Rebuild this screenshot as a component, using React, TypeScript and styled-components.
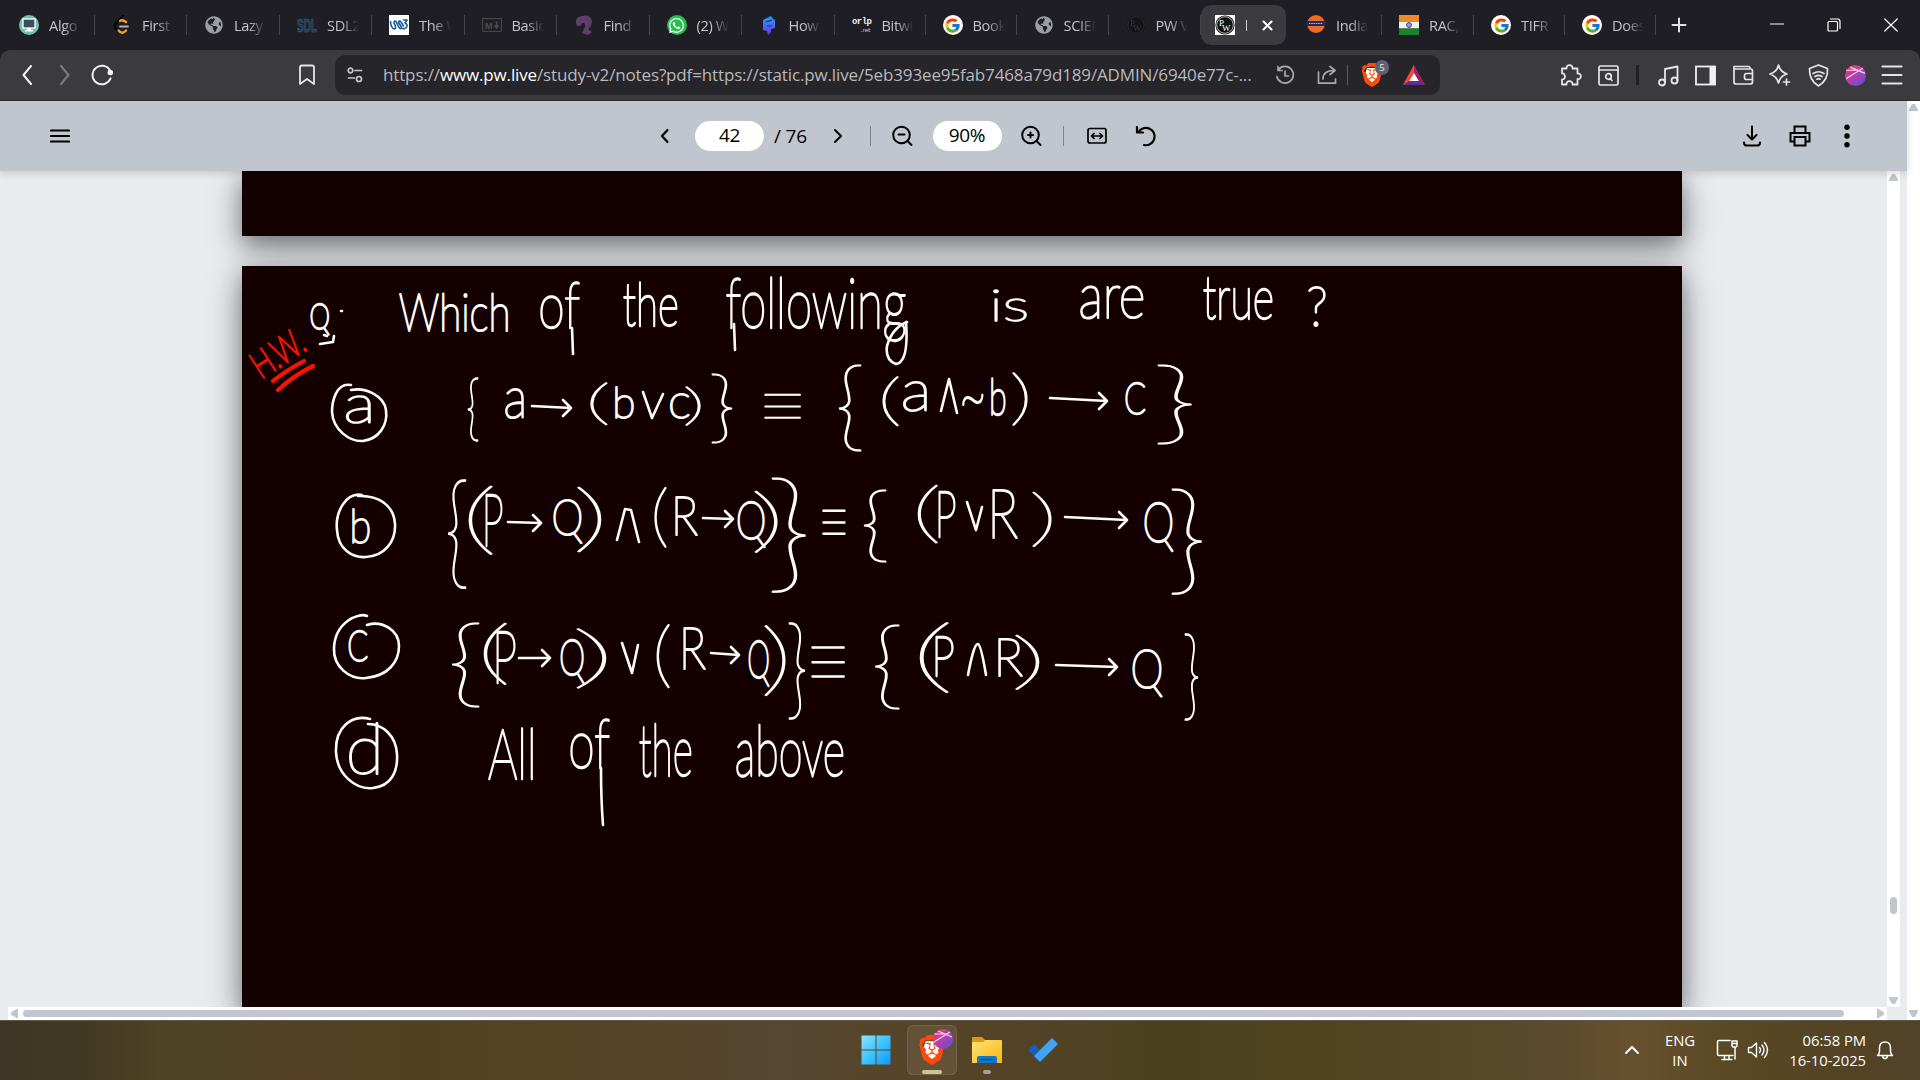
import React, { useMemo } from "react";
import styled, { createGlobalStyle } from "styled-components";
import { SiBrave } from "react-icons/si";
import { FcGoogle } from "react-icons/fc";
import { FaGlobeAmericas, FaWhatsapp } from "react-icons/fa";

const Global = createGlobalStyle`
  * { box-sizing: border-box; }
  body { margin: 0; overflow: hidden; background: #1f1e25; font-family: "Open Sans", "Noto Sans", sans-serif; }
  svg { display: block; }
`;

const Screen = styled.div`
  width: 1920px;
  height: 1080px;
  display: flex;
  flex-direction: column;
  overflow: hidden;
`;

/* ---------- tab strip ---------- */
const TabStrip = styled.div`
  height: 50px;
  background: #1f1e24;
  display: flex;
  align-items: center;
  padding-left: 2px;
`;
const Tab = styled.div<{ $w: number }>`
  width: ${(p) => p.$w}px;
  height: 40px;
  display: flex;
  align-items: center;
  gap: 10px;
  padding-left: 17px;
  position: relative;
  &::after {
    content: "";
    position: absolute;
    right: 0;
    top: 10px;
    width: 1px;
    height: 20px;
    background: #44434a;
  }
`;
const ActiveTab = styled.div`
  width: 85px;
  height: 40px;
  margin-right: 3px;
  border-radius: 10px;
  background: #3b3a3f;
  display: flex;
  align-items: center;
  padding-left: 14px;
`;
const ActiveMark = styled.div`
  width: 1px;
  height: 11px;
  margin: 0 15px 0 11px;
  background: #cfcfd2;
`;
const TabLabel = styled.div`
  width: 32px;
  overflow: hidden;
  white-space: nowrap;
  font-size: 14.6px;
  letter-spacing: -0.35px;
  color: #c3c3c8;
  line-height: 24px;
  padding-bottom: 1px;
  mask-image: linear-gradient(90deg, #000 45%, transparent 100%);
`;
const Fav = styled.div<{ $bg?: string; $round?: boolean; $dim?: number }>`
  width: 20px;
  height: 20px;
  flex: none;
  display: flex;
  align-items: center;
  justify-content: center;
  background: ${(p) => p.$bg || "transparent"};
  border-radius: ${(p) => (p.$round ? "50%" : "0")};
  opacity: ${(p) => p.$dim || 1};
`;
const PlusWrap = styled.div`
  margin-left: 15px;
`;
const WindowButtons = styled.div`
  margin-left: auto;
  padding-right: 22px;
  display: flex;
  align-items: center;
  gap: 43px;
`;

/* ---------- browser toolbar ---------- */
const ToolbarBack = styled.div`
  background: #1f1e24;
`;
const Toolbar = styled.div`
  height: 51px;
  background: #3b3a3f;
  border-radius: 10px 10px 0 0;
  border-bottom: 1px solid #2e2d33;
  display: flex;
  align-items: center;
`;
const Slot = styled.div<{ $gap?: number }>`
  width: 30px;
  height: 30px;
  flex: none;
  margin-left: ${(p) => p.$gap || 0}px;
  display: flex;
  align-items: center;
  justify-content: center;
  position: relative;
`;
const UrlBar = styled.div`
  width: 1105px;
  height: 40px;
  margin-left: 13px;
  border-radius: 10px;
  background: #26252a;
  display: flex;
  align-items: center;
  padding-left: 5px;
`;
const Url = styled.div`
  width: 880px;
  margin-left: 13px;
  font-size: 17px;
  letter-spacing: -0.14px;
  line-height: 26px;
  white-space: nowrap;
  color: #b9b9be;
  b { font-weight: 400; color: #fff; }
`;
const VLine = styled.div<{ $c: string; $h: number; $gap: number; $w?: number }>`
  width: ${(p) => p.$w || 1}px;
  height: ${(p) => p.$h}px;
  flex: none;
  margin-left: ${(p) => p.$gap}px;
  background: ${(p) => p.$c};
`;
const Badge = styled.div`
  position: absolute;
  left: 18px;
  top: 0;
  width: 14px;
  height: 15px;
  border-radius: 7px;
  background: #5f6270;
  color: #e8e8ea;
  font-size: 9.5px;
  line-height: 15px;
  text-align: center;
`;

/* ---------- pdf viewer ---------- */
const Viewer = styled.div`
  flex: 1;
  min-height: 0;
  display: flex;
`;
const ViewerMain = styled.div`
  width: 1907px;
  display: flex;
  flex-direction: column;
`;
const PdfBar = styled.div`
  height: 70px;
  flex: none;
  background: #c1c5ce;
  display: flex;
  align-items: center;
  color: #000;
  font-size: 19px;
  position: relative;
  z-index: 1;
  box-shadow: 0 2px 8px rgba(0, 0, 0, 0.16);
`;
const Pill = styled.div<{ $gap: number }>`
  width: 69px;
  height: 30px;
  margin-left: ${(p) => p.$gap}px;
  border-radius: 15px;
  background: #fff;
  line-height: 29px;
  text-align: center;
  letter-spacing: -0.3px;
`;
const PageCount = styled.div`
  width: 49px;
  padding-left: 10px;
  letter-spacing: -0.2px;
  white-space: nowrap;
`;
const Body = styled.div`
  flex: 1;
  min-height: 0;
  display: flex;
  background: #e9ebef;
`;
const Canvas = styled.div`
  width: 1887px;
  display: flex;
  flex-direction: column;
`;
const Pages = styled.div`
  height: 836px;
  overflow: hidden;
  display: flex;
  flex-direction: column;
  gap: 30px;
  padding-left: 242px;
`;
const Page = styled.div<{ $h: number }>`
  width: 1440px;
  height: ${(p) => p.$h}px;
  flex: none;
  background: #140000;
  box-shadow: 0 13px 38px rgba(0, 0, 0, 0.28), 0 8px 22px rgba(0, 0, 0, 0.34);
`;
const HScroll = styled.div`
  height: 13px;
  margin-left: 8px;
  background: #fff;
  display: flex;
  align-items: center;
  padding: 0 3px;
`;
const HThumb = styled.div`
  width: 1821px;
  height: 7px;
  margin: 0 auto 0 5px;
  border-radius: 4px;
  background: #c1c5ce;
`;
const VScroll = styled.div<{ $h?: number }>`
  width: 13px;
  height: ${(p) => (p.$h ? p.$h + "px" : "100%")};
  flex: none;
  background: #fff;
  display: flex;
  flex-direction: column;
  align-items: center;
  padding: 3px 0;
`;
const VThumb = styled.div`
  width: 7px;
  height: 17px;
  margin-top: 716px;
  border-radius: 4px;
  background: #c1c5ce;
`;
const Tri = styled.div<{ $d: "u" | "d" | "l" | "r" }>`
  width: ${(p) => ("ud".includes(p.$d) ? 9 : 7)}px;
  height: ${(p) => ("ud".includes(p.$d) ? 7 : 9)}px;
  flex: none;
  margin-top: ${(p) => (p.$d === "d" ? "auto" : "0")};
  background: #c1c5ce;
  clip-path: ${(p) =>
    ({
      u: "polygon(35% 0,65% 0,100% 80%,100% 100%,0 100%,0 80%)",
      d: "polygon(0 0,100% 0,100% 20%,65% 100%,35% 100%,0 20%)",
      l: "polygon(0 35%,80% 0,100% 0,100% 100%,80% 100%,0 65%)",
      r: "polygon(0 0,20% 0,100% 35%,100% 65%,20% 100%,0 100%)",
    })[p.$d]};
`;

/* ---------- taskbar ---------- */
const Taskbar = styled.div`
  height: 60px;
  flex: none;
  border-top: 1px solid #625746;
  background: linear-gradient(90deg, #3e3624 0, #423923 80px, #4e4425 170px, #4f4325 215px, #543f26 300px, #51401f 420px, #554326 560px, #574630 780px, #564428 930px, #524225 1060px, #4a4120 1160px, #50431f 1320px, #5b4a2e 1560px, #68502f 1630px, #584824 1740px, #534224 1860px, #52422a 1920px);
  display: flex;
  align-items: center;
  padding: 0 0 1px 851px;
  color: #fff;
`;
const Task = styled.div<{ $on?: boolean }>`
  width: 50px;
  height: 50px;
  margin-right: 5.5px;
  border-radius: 6px;
  border: 1px solid ${(p) => (p.$on ? "rgba(255,255,255,.1)" : "transparent")};
  background: ${(p) => (p.$on ? "rgba(255,255,255,.08)" : "transparent")};
  display: flex;
  align-items: center;
  justify-content: center;
  position: relative;
`;
const ProfileBadge = styled.div`
  position: absolute;
  left: 25px;
  top: 3px;
`;
const Running = styled.div<{ $w: number; $c: string }>`
  position: absolute;
  bottom: 0;
  left: calc(50% - ${(p) => p.$w / 2}px);
  width: ${(p) => p.$w}px;
  height: 4px;
  border-radius: 2px;
  background: ${(p) => p.$c};
`;
const Tray = styled.div`
  margin-left: auto;
  padding: 0 20px 1px 0;
  display: flex;
  align-items: center;
  font-size: 14.8px;
  line-height: 20px;
`;
const TrayText = styled.div<{ $w: number; $align: string; $gap: number; $ls?: number }>`
  width: ${(p) => p.$w}px;
  margin-left: ${(p) => p.$gap}px;
  text-align: ${(p) => p.$align};
  letter-spacing: ${(p) => p.$ls || 0}px;
  white-space: nowrap;
  display: flex;
  flex-direction: column;
`;

/* ---------- notes on the page ---------- */
const INK = "#fffdfa";
const FONT = '"Lato", "Open Sans", sans-serif';

type Box = [string, number, number, number, number];

/* Text whose visible bounds are stretched to the box x0,y0 - x1,y1. */
const Fit = ({ box, color = INK, w = 2 }: { box: Box; color?: string; w?: number }) => {
  const [text, x0, y0, x1, y1] = box;
  const m = useMemo(() => {
    const c = document.createElement("canvas").getContext("2d")!;
    c.font = `100 100px ${FONT}`;
    const t = c.measureText(text);
    const gw = t.actualBoundingBoxLeft + t.actualBoundingBoxRight;
    const gh = t.actualBoundingBoxAscent + t.actualBoundingBoxDescent;
    const sx = (x1 - x0 - 2) / gw;
    const sy = (y1 - y0 - 2) / gh;
    return `translate(${x0 + 1 + t.actualBoundingBoxLeft * sx} ${y0 + 1 + t.actualBoundingBoxAscent * sy}) scale(${sx} ${sy})`;
  }, [text, x0, y0, x1, y1]);
  return (
    <text
      transform={m}
      fontFamily={FONT}
      fontSize="100"
      fontWeight="100"
      fill={color}
      stroke={color}
      strokeWidth={w}
      strokeLinejoin="round"
      vectorEffect="non-scaling-stroke"
    >
      {text}
    </text>
  );
};

const words: Box[] = [
  ["Q", 310, 303, 330, 336], ["Which", 399, 292, 508, 333], ["of", 540, 282, 580, 330], ["the", 623, 281, 678, 328],
  ["following", 726, 275, 906, 342], ["is", 993, 288, 1027, 322], ["are", 1080, 286, 1144, 320], ["true", 1203, 278, 1273, 321], ["?", 1308, 285, 1326, 328],
  ["a", 346, 396, 371, 425], ["{", 467, 376, 479, 442], ["a", 505, 388, 524, 420], ["(", 590, 381, 608, 426], ["b", 615, 385, 634, 419],
  ["c", 670, 393, 690, 419], [")", 685, 385, 701, 427], ["}", 711, 373, 733, 443], ["≡", 764, 393, 801, 420],
  ["{", 838, 363, 862, 452], ["(", 882, 375, 899, 427], ["a", 903, 381, 927, 413], ["~", 962, 394, 984, 406],
  ["b", 991, 377, 1006, 416], [")", 1012, 372, 1028, 427], ["C", 1125, 381, 1146, 415], ["}", 1157, 363, 1193, 445],
  ["b", 352, 507, 370, 544], ["{", 447, 477, 467, 589], ["(", 468, 485, 493, 556], ["P", 485, 495, 503, 547], ["Q", 553, 498, 583, 544],
  [")", 577, 486, 602, 553], ["(", 654, 487, 667, 549], ["R", 675, 496, 698, 536], ["Q", 737, 500, 766, 548],
  [")", 754, 489, 778, 554], ["}", 771, 477, 807, 593], ["≡", 822, 509, 846, 536], ["{", 863, 488, 887, 563], ["(", 917, 484, 938, 545],
  ["P", 938, 491, 956, 538], ["R", 992, 490, 1018, 539], [")", 1032, 490, 1052, 548], ["Q", 1144, 502, 1174, 552],
  ["}", 1171, 488, 1203, 595],
  ["C", 348, 630, 368, 662], ["{", 451, 621, 480, 708], ["(", 483, 622, 507, 686], ["P", 496, 632, 516, 684], ["Q", 560, 638, 585, 684],
  [")", 576, 628, 607, 690], ["(", 656, 623, 670, 689], ["R", 683, 628, 706, 670], ["Q", 748, 640, 770, 687],
  [")", 764, 624, 786, 697], ["}", 788, 621, 806, 720], ["≡", 811, 646, 845, 679], ["{", 874, 623, 900, 710], ["(", 919, 621, 949, 695],
  ["P", 935, 636, 954, 677], ["R", 998, 638, 1023, 677], [")", 1015, 634, 1040, 691], ["Q", 1132, 649, 1163, 698],
  ["}", 1184, 632, 1199, 721],
  ["d", 349, 722, 379, 776], ["All", 488, 727, 533, 780], ["of", 570, 719, 610, 770], ["the", 639, 723, 692, 778], ["above", 736, 724, 844, 778],
];

const arrows: [number, number, number, number][] = [
  [532, 406, 571, 408], [1050, 398, 1107, 401], [508, 522, 541, 523], [703, 518, 733, 519], [1065, 517, 1127, 520],
  [519, 658, 550, 658], [711, 653, 739, 655], [1056, 665, 1117, 667],
];

/* logical or / and marks */
const wedges = [
  "M643 392L652 418L663 394",
  "M941 411L949 379L957 413",
  "M617 540L625 509L631 510L639 542",
  "M967 502L976 530L982 507",
  "M622 643L632 673L638 645",
  "M968 675Q974 643 978 644Q981 645 986 675",
];

const circles = [
  "M351 385C336 382 332 402 332 412C333 430 350 442 363 441C379 439 388 425 386 410C384 396 366 387 351 390",
  "M362 495C346 492 335 512 337 530C338 549 352 558 366 557C384 556 396 542 395 524C394 505 378 495 358 496",
  "M367 616C359 612 335 622 334 648C333 667 350 680 366 678C388 676 399 662 399 646C399 630 382 620 367 625",
  "M370 719C352 714 335 727 336 752C337 775 356 790 373 788C391 786 398 772 397 754C396 736 383 724 368 724",
];

const Notes = () => (
  <svg width="1440" height="741" viewBox="242 266 1440 741">
    {words.map((b, i) => (
      <Fit key={i} box={b} w={"(){}≡".includes(b[0]) ? 1.4 : 2} />
    ))}
    <g fill="none" stroke={INK} strokeWidth="2.6" strokeLinecap="round" strokeLinejoin="round">
      {circles.map((d) => (
        <path key={d} d={d} />
      ))}
      {wedges.map((d) => (
        <path key={d} d={d} />
      ))}
      {arrows.map(([a, b, c, d]) => (
        <path key={a + "-" + b} d={`M${a} ${b}L${c} ${d}M${c - 8} ${d - 8}L${c} ${d}L${c - 8} ${d + 8}`} />
      ))}
      {/* long pen tails under the words */}
      <path d="M572 328L573 354M601 768Q601 800 603 825M734 324L735 350M906 322Q909 362 896 364Q885 360 887 346Q892 328 907 322" />
      <path d="M324 335L327 336M320 344L333 342L334 336M341 311L342 311" />
    </g>
    <g transform="translate(266 378) rotate(-33)">
      <Fit box={["H.W.", -3, -29, 50, 0]} color="#f51400" w={2} />
    </g>
    <path d="M273 381Q287 370 304 361M278 390Q293 376 313 366" fill="none" stroke="#f51400" strokeWidth="4.2" strokeLinecap="round" />
  </svg>
);

/* ---------- icons ---------- */
const Line = ({ s = 20, c = "#e6e6e8", w = 1.8, d, children }: any) => (
  <svg width={s} height={s} viewBox={`0 0 ${s} ${s}`} fill="none" stroke={c} strokeWidth={w} strokeLinecap="round" strokeLinejoin="round">
    {d && <path d={d} />}
    {children}
  </svg>
);
const BraveMark = ({ size }: { size: number }) => (
  <svg width={size} height={size} viewBox="0 0 24 24">
    <path d="M7 5h10l2 6-3 8-4 3-4-3-3-8z" fill="#fff" />
    <SiBrave size={24} color="#fb4a0a" />
  </svg>
);
const Orb = ({ s = 21 }: { s?: number }) => (
  <svg width={s} height={s} viewBox="0 0 20 20">
    <defs>
      <linearGradient id="orb" x1="0" y1="0" x2="1" y2="1">
        <stop offset="0" stopColor="#f0356a" />
        <stop offset=".5" stopColor="#b23fb0" />
        <stop offset="1" stopColor="#4a55d6" />
      </linearGradient>
    </defs>
    <circle cx="10" cy="10" r="10" fill="url(#orb)" />
    <path d="M1 13L17 3M5 2L19 8M1 5L14 5" stroke="#f6d6ee" strokeWidth="1.1" fill="none" />
  </svg>
);
const PwMark = ({ ring = "#111", ink = "#fff" }) => (
  <svg width="20" height="20" viewBox="0 0 20 20">
    <circle cx="10" cy="10" r="9.6" fill={ring} />
    <circle cx="10" cy="10" r="8.3" fill="none" stroke={ink} strokeWidth=".7" />
    <text x="4" y="10.5" fontFamily="Liberation Serif, serif" fontSize="9" fill={ink}>P</text>
    <text x="7" y="16" fontFamily="Liberation Serif, serif" fontSize="9" fill={ink}>W</text>
  </svg>
);
const Globe = () => (
  <Fav><FaGlobeAmericas size={18} color="#9a9da3" /></Fav>
);
const Google = () => (
  <Fav $bg="#fff" $round><FcGoogle size={17} /></Fav>
);

const leftTabs: [number, string, React.ReactNode][] = [
  [93, "Algo", <Fav $bg="#6fc3ae" $round><svg width="14" height="16" viewBox="0 0 14 16"><rect x="1" y="2" width="12" height="9" fill="#3f4c5c" stroke="#fff" strokeWidth="1.3" /><path d="M5 11h4v2h2v1.5H3V13h2z" fill="#fff" /></svg></Fav>],
  [92, "First", <Fav><Line s={20} c="#050505" w={2.4}><path d="M11 1L3.5 9Q2 11 3.5 13L6 16" /><path d="M6.5 15.5Q10 20 14 15.5M8 6Q10 4 14 7" stroke="#f7a01b" /><path d="M8 11.5H16" stroke="#b3b3b3" strokeWidth="1.800" /></Line></Fav>],
  [93, "Lazy", <Globe />],
  [92, "SDL2", <Fav><svg width="20" height="18"><text x="0" y="15.500" textLength="20" lengthAdjust="spacingAndGlyphs" fontFamily="Liberation Sans" fontWeight="700" fontSize="19" fill="#173654" stroke="#4a6684" strokeWidth=".7">SDL</text></svg></Fav>],
  [92.5, "The W", <Fav $bg="#fff"><Line s={20} c="#175b9c" w={1.600}><path d="M1.500 6.500Q2 13.500 5.500 14Q8 13 5 8Q5 5 7 6.500L10 12.500Q12 15 12.500 12L9.500 7.500Q10 5 12 7L14.500 11M14.500 5H18L16 8Q18.500 9 18 11.500Q16.500 14.500 13.500 13.500" /></Line></Fav>],
  [92, "Basic", <Fav><svg width="20" height="14"><rect x=".6" y=".6" width="18.800" height="12.800" fill="none" stroke="#4a4a4c" /><text x="3" y="10.500" fontFamily="Liberation Sans" fontWeight="700" fontSize="9" fill="#4e4e50">M</text><path d="M14.500 3.500v6M12.500 7.500l2 2.500 2-2.500" stroke="#4e4e50" fill="none" strokeWidth="1.500" /></svg></Fav>],
  [93, "Find t", <Fav><svg width="20" height="20"><path d="M2 8Q1 2 8 1Q16-1 18 6Q18 11 14 14L18 17L14 20L8 18L11 12Q12 7 8 8Q7 12 3 11z" fill="#5f3e69" /></svg></Fav>],
  [92, "(2) W", <Fav $bg="#25c04f" $round><FaWhatsapp size={17} color="#fff" /></Fav>],
  [93, "How t", <Fav><svg width="16" height="20"><defs><linearGradient id="hw" x1="0" y1="0" x2="0" y2="1"><stop offset="0" stopColor="#16a6ee" /><stop offset=".5" stopColor="#4a66f5" /><stop offset="1" stopColor="#7b34e8" /></linearGradient></defs><path d="M2 5L10 1L12 4L14 5V13L10 14V17L7 20L6 16L2 15z" fill="url(#hw)" /><path d="M5 7L11 5M6 11h5" stroke="#1f2a6a" strokeWidth="1.200" /></svg></Fav>],
  [91, "Bitwis", <Fav><svg width="20" height="18"><text x="0" y="8" textLength="20" fontFamily="Liberation Mono" fontWeight="700" fontSize="9" fill="#f0f0f0">orlp</text><text x="8" y="16" textLength="11" fontFamily="Liberation Mono" fontSize="6" fill="#c5c5c5">.net</text></svg></Fav>],
  [91, "Book", <Google />],
  [92, "SCIEN", <Globe />],
  [92.5, "PW V", <Fav $dim={0.6}><PwMark ring="#0d0d0f" ink="#4a4a4e" /></Fav>],
];
const rightTabs: [number, string, React.ReactNode][] = [
  [93, "India", <Fav><svg width="20" height="20"><circle cx="10" cy="9" r="9" fill="#ee6b23" /><rect x="0" y="6" width="20" height="5" rx="1" fill="#182a68" /><path d="M3 8.500h14" stroke="#b9c0d8" strokeWidth="1.200" strokeDasharray="1.500 .8" /><path d="M2 19.300h16" stroke="#15174a" strokeWidth="1.600" /></svg></Fav>],
  [92, "RAC,", <Fav><svg width="20" height="20"><rect width="20" height="7" fill="#ef8a27" /><rect y="7" width="20" height="6.500" fill="#f1f1f1" /><rect y="13.500" width="20" height="6.500" fill="#17832b" /><circle cx="10" cy="10" r="2.400" fill="#9a9fcb" stroke="#3a3d8e" /></svg></Fav>],
  [91, "TIFR", <Google />],
  [91, "Does", <Google />],
];

const TabItem = ({ t }: { t: [number, string, React.ReactNode] }) => (
  <Tab $w={t[0]}>
    {t[2]}
    <TabLabel>{t[1]}</TabLabel>
  </Tab>
);

export default function App() {
  return (
    <Screen>
      <Global />
      <TabStrip>
        {leftTabs.map((t, i) => <TabItem key={i} t={t} />)}
        <ActiveTab>
          <Fav $bg="#fff"><PwMark /></Fav>
          <ActiveMark />
          <Line s={11} c="#fff" w={2.1} d="M1.500 1.500l8 8M9.500 1.500l-8 8" />
        </ActiveTab>
        {rightTabs.map((t, i) => <TabItem key={i} t={t} />)}
        <PlusWrap><Line s={16} c="#e2e2e4" w={2} d="M8 1.500v13M1.500 8h13" /></PlusWrap>
        <WindowButtons>
          <Line s={14} c="#fff" w={1.200} d="M.5 6h13" />
          <Line s={14} c="#fff" w={1.200} d="M1 4.500q0-1 1-1h7.500q1 0 1 1v7.500q0 1-1 1h-7.500q-1 0-1-1zM3.500 1h7q2.500 0 2.500 2.500v7" />
          <Line s={14} c="#fff" w={1.200} d="M.8 1l12.400 12M13.200 1L.8 13" />
        </WindowButtons>
      </TabStrip>

      <ToolbarBack>
        <Toolbar>
          <Slot $gap={12}><Line c="#f2f2f3" w={2} d="M14 1L6.500 10l7.500 9" /></Slot>
          <Slot $gap={8}><Line c="#7c7b81" w={2} d="M6 1l7.500 9L6 19" /></Slot>
          <Slot $gap={7}><Line s={22} c="#f2f2f3" w={2}><path d="M19.500 14.500A9.300 9.300 0 1 1 19 6.500" /><circle cx="19.300" cy="8.500" r="1.800" fill="#f2f2f3" /></Line></Slot>
          <Slot $gap={175}><Line s={22} d="M4 3.500q0-2 2-2h10q2 0 2 2V20l-7-5-7 5z" /></Slot>
          <UrlBar>
            <Slot><Line s={18} c="#c9c9cc" w={1.700}><circle cx="4.500" cy="4.500" r="2.300" /><circle cx="13" cy="13" r="2.500" /><path d="M9 4.500h6.500M2.500 12h6" /></Line></Slot>
            <Url>https://<b>www.pw.live</b>/study-v2/notes?pdf=https://static.pw.live/5eb393ee95fab7468a79d189/ADMIN/6940e77c-...</Url>
            <Slot $gap={7}><Line c="#a9a9ae" w={1.700}><path d="M3.200 5A8.300 8.300 0 1 1 1.900 11.500M3 1.500V5.500H7M10 6v5h3.500" /></Line></Slot>
            <Slot $gap={12}><Line c="#a9a9ae" w={1.700} d="M1.500 7v11.200h17V14M6 14q0-8.500 11-8.500M13 1.500l5 4-5 4" /></Slot>
            <VLine $c="#5b5a60" $h={20} $gap={5} />
            <Slot $gap={9}><BraveMark size={24} /><Badge>5</Badge></Slot>
            <Slot $gap={12}>
              <svg width="24" height="22" viewBox="0 0 24 22"><path d="M12 1L1 21h22z" fill="#662d91" /><path d="M12 1L1 21l6-4 5-8z" fill="#ff4724" /><path d="M12 1l11 20-6-4-5-8z" fill="#9e1f63" /><path d="M12 9l4.800 8H7.200z" fill="#fff" /></svg>
            </Slot>
          </UrlBar>
          <Slot $gap={116}><Line s={24} w={1.800} d="M3 5.500h4.500C7 1 14 1 13.500 5.500H18.500V10.500C23 10 23 16.500 18.500 16V21.500H13.500C14 17 7 17 7.500 21.500H3V16.500C7 17 7 10 3 10.500z" /></Slot>
          <Slot $gap={7}><Line s={21} w={1.700}><rect x="1" y="1" width="19" height="19" rx="1.500" /><path d="M1 5h19M12 13.500l2 2" /><circle cx="10.500" cy="11.500" r="2.800" /></Line></Slot>
          <VLine $c="#222126" $h={20} $gap={13} $w={3} />
          <Slot $gap={14}><Line s={23} w={1.800}><circle cx="5" cy="18.500" r="3" /><circle cx="17.500" cy="16.500" r="3" /><path d="M8 18.500V5l12.500-2.500v14" /></Line></Slot>
          <Slot $gap={7}><svg width="21" height="21"><rect x="1" y="1.500" width="19" height="18" fill="none" stroke="#f0f0f2" strokeWidth="1.800" /><rect x="14.500" y="1" width="6" height="19" fill="#f0f0f2" /></svg></Slot>
          <Slot $gap={8}><Line s={22} w={1.700} d="M2 4.500V18q0 2 2 2h14q2.500 0 2.500-2V7q0-2-2-2H2V2.500h14.500q1.500 0 1.500 2M20.500 9.500h-6q-2 0-2 2v2q0 2 2 2h6" /></Slot>
          <Slot $gap={7}><Line s={24} w={1.700} d="M10.500 2q1.500 6.500 8.500 9q-7 2-8.500 9q-2-7-8.500-9q7-2 8.500-9zM18.500 16v6M15.500 19h6" /></Slot>
          <Slot $gap={8}><Line s={23} w={1.700} d="M11.500 1l9 3.500q.8 12-9 17.500Q2 16.500 2.500 4.500zM6 9.500q5.500-3.500 11 0M8 12.500q3.500-2.300 7 0M10 15.200q1.500-1 3 0" /></Slot>
          <Slot $gap={7}><Orb /></Slot>
          <Slot $gap={7}><Line s={22} w={2} d="M1.500 2.500h19M1.500 11h19M1.500 19.500h19" /></Slot>
        </Toolbar>
      </ToolbarBack>

      <Viewer>
        <ViewerMain>
          <PdfBar>
            <Slot $gap={45}><Line s={20} c="#000" w={2.200} d="M1 4.500h18M1 10h18M1 15.500h18" /></Slot>
            <Slot $gap={575}><Line s={16} c="#000" w={2.200} d="M10.500 2L5 8l5.500 6" /></Slot>
            <Pill $gap={15}>42</Pill>
            <PageCount>/ 76</PageCount>
            <Slot $gap={10}><Line s={16} c="#000" w={2} d="M5 2l6 6-6 6" /></Slot>
            <VLine $c="#7f838b" $h={20} $gap={16.5} />
            <Slot $gap={16.5}><Line s={22} c="#000" w={2}><circle cx="10.500" cy="10" r="8.300" /><path d="M16.500 16l4 4M7.500 9.500h6" /></Line></Slot>
            <Pill $gap={15.5}>90%</Pill>
            <Slot $gap={14.5}><Line s={22} c="#000" w={2}><circle cx="10.500" cy="10" r="8.300" /><path d="M16.500 16l4 4M8 10h5M10.500 7.500v5" /></Line></Slot>
            <VLine $c="#7f838b" $h={20} $gap={17} />
            <Slot $gap={18}><Line s={20} c="#000" w={1.700}><rect x="1" y="2.500" width="18" height="14.500" rx="2" /><path d="M4.500 10h11M7 7.500L4.500 10L7 12.500M13 7.500l2.500 2.500L13 12.500" /></Line></Slot>
            <Slot $gap={19}><Line s={22} c="#000" w={2.200} d="M2 2v5.500h6M3.500 7A8.700 8.700 0 1 1 9 20" /></Slot>
            <Slot $gap={576}><Line s={22} c="#000" w={2} d="M11 1.500V14M6.500 10l4.500 4.500 4.500-4.500M3 17.500q0 3 2.500 3h11q2.500 0 2.500-3" /></Slot>
            <Slot $gap={18}><svg width="22" height="22" fill="none" stroke="#000" strokeWidth="2"><path d="M5.500 7V1.500h11V7M5.500 16.500H1.500V8h19v8.500h-4M5.500 12h11v8.500h-11z" /></svg></Slot>
            <Slot $gap={17}><svg width="8" height="24"><circle cx="4" cy="3.200" r="2.700" /><circle cx="4" cy="12" r="2.700" /><circle cx="4" cy="20.800" r="2.700" /></svg></Slot>
          </PdfBar>
          <Body>
            <Canvas>
              <Pages>
                <Page $h={65} />
                <Page $h={741}><Notes /></Page>
              </Pages>
              <HScroll><Tri $d="l" /><HThumb /><Tri $d="r" /></HScroll>
            </Canvas>
            <VScroll $h={836}><Tri $d="u" /><VThumb /><Tri $d="d" /></VScroll>
          </Body>
        </ViewerMain>
        <VScroll><Tri $d="u" /><Tri $d="d" /></VScroll>
      </Viewer>

      <Taskbar>
        <Task>
          <svg width="30" height="30"><defs><linearGradient id="win" x1="0" y1="0" x2="1" y2="1"><stop offset="0" stopColor="#8fe2ff" /><stop offset=".5" stopColor="#3cc3fd" /><stop offset="1" stopColor="#1296f5" /></linearGradient></defs><path d="M.5.5h14v14H.5zM15.500.5h14v14h-14zM.5 15.500h14v14H.5zM15.500 15.500h14v14h-14z" fill="url(#win)" /></svg>
        </Task>
        <Task $on>
          <BraveMark size={30} />
          <ProfileBadge><Orb s={20} /></ProfileBadge>
          <Running $w={20} $c="#c9c88b" />
        </Task>
        <Task>
          <svg width="30" height="28"><defs><linearGradient id="fo" x1="0" y1="0" x2="1" y2="1"><stop offset="0" stopColor="#ffe07a" /><stop offset="1" stopColor="#fbb90c" /></linearGradient></defs><path d="M0 2q0-1 1-1h9l3 3v4H0z" fill="#dc9a08" /><path d="M0 6h11l2-2h16q1 0 1 1v22H0z" fill="url(#fo)" /><path d="M5 27v-5q0-2 2-2h16q2 0 2 2v5z" fill="#1178c9" /><path d="M9 23.500h12" stroke="#0a4b87" strokeWidth="1.300" /></svg>
          <Running $w={8} $c="#a9a199" />
        </Task>
        <Task>
          <svg width="30" height="26"><path d="M0 13l6-6 11 11-5 7z" fill="#1b5cbe" /><path d="M6 19L24 1l6 6-18 18z" fill="#41a3f2" /></svg>
        </Task>
        <Tray>
          <Line s={16} c="#fff" w={2} d="M2 11l6-6 6 6" />
          <TrayText $gap={22} $w={36} $align="center"><span>ENG</span><span>IN</span></TrayText>
          <Slot $gap={14}><Line s={22} c="#fff" w={1.500}><path d="M14 1.500H3q-1.500 0-1.500 1.500V15q0 1.500 1.500 1.500h14M6 20.500h10M8.500 17v3.500M13 17v3.500M19 8v12M16 2h5v4.500q0 1.500-1.500 1.500h-2Q16 8 16 6.500zM16 4.500h5" /></Line></Slot>
          <Slot $gap={1}><Line s={22} c="#fff" w={1.400} d="M1.500 8.500h3L9.500 4v14l-5-4.500h-3zM12.500 8.500q2 2.500 0 5M15 6q4 5 0 10M17.500 3.500q6 7.500 0 15" /></Slot>
          <TrayText $gap={8} $w={85} $align="right" $ls={-0.05}><span>06:58 PM</span><span>16-10-2025</span></TrayText>
          <Slot $gap={4}><Line s={20} c="#fff" w={1.500} d="M2.500 15.500q2-2 2-4V8q0-6 5.500-6t5.500 6v3.500q0 2 2 4zM7.500 16q.5 2.500 2.500 2.500t2.500-2.500" /></Slot>
        </Tray>
      </Taskbar>
    </Screen>
  );
}
